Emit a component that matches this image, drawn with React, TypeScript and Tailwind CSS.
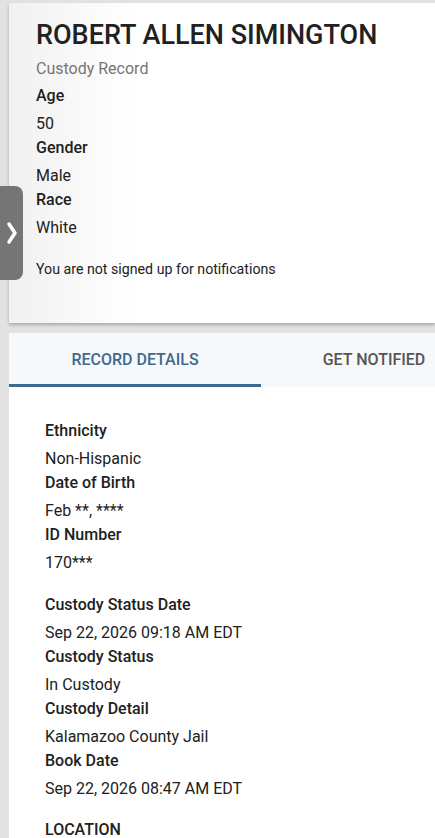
import React from 'react';

type Field = { label: string; value: string };

const summary: Field[] = [
  { label: 'Age', value: '50' },
  { label: 'Gender', value: 'Male' },
  { label: 'Race', value: 'White' },
];

const idFields: Field[] = [
  { label: 'Ethnicity', value: 'Non-Hispanic' },
  { label: 'Date of Birth', value: 'Feb **, ****' },
  { label: 'ID Number', value: '170***' },
];

const custodyFields: Field[] = [
  { label: 'Custody Status Date', value: 'Sep 22, 2026 09:18 AM EDT' },
  { label: 'Custody Status', value: 'In Custody' },
  { label: 'Custody Detail', value: 'Kalamazoo County Jail' },
  { label: 'Book Date', value: 'Sep 22, 2026 08:47 AM EDT' },
];

function FieldList({ fields }: { fields: Field[] }) {
  return (
    <div>
      {fields.map((f) => (
        <div key={f.label}>
          <div className="text-[16px] leading-6 font-medium text-[#212121]">{f.label}</div>
          <div className="mt-1 text-[16px] leading-6 text-[#212121]">{f.value}</div>
        </div>
      ))}
    </div>
  );
}

export default function App() {
  return (
    <div
      className="relative min-h-screen h-[838px] overflow-hidden bg-[#e2e2e2] pl-[9px] pt-[3px]"
      style={{ fontFamily: 'Roboto, "Noto Sans", sans-serif' }}
    >
      {/* header card */}
      <div className="h-[320px] bg-gradient-to-r from-[#f1f1f1] via-white via-30% to-white shadow-[0_2px_3px_rgba(0,0,0,0.25)] pl-[27px] pt-[15px]">
        <h1 className="text-[27px] leading-[34px] font-medium text-[#212121] whitespace-nowrap">
          ROBERT ALLEN SIMINGTON
        </h1>
        <div className="mt-[5px] text-[16px] leading-6 text-[#757575]">Custody Record</div>
        <div className="mt-[3px]">
          <FieldList fields={summary} />
        </div>
        <p className="mt-[17px] text-[14.2px] leading-6 text-[#212121]">You are not signed up for notifications</p>
      </div>

      {/* details card */}
      <div className="mt-[10px] bg-white h-[600px]">
        <div className="flex h-[54px] overflow-hidden bg-[#f7f8fa]">
          <div className="flex w-[252px] shrink-0 items-center justify-center border-b-[3px] border-[#3b6b8f] pt-[3px] text-[16px] font-medium uppercase text-[#3b6b8f]">
            Record Details
          </div>
          <div className="flex w-[226px] shrink-0 items-center justify-center text-[16px] font-medium uppercase text-[#555555] whitespace-nowrap">
            Get Notified
          </div>
        </div>
        <div className="pl-[36px] pt-[32px]">
          <FieldList fields={idFields} />
          <div className="mt-[18px]">
            <FieldList fields={custodyFields} />
          </div>
          <div className="mt-[17px] text-[16px] leading-6 font-medium text-[#212121]">LOCATION</div>
        </div>
      </div>

      {/* side drawer handle */}
      <button className="absolute left-0 top-[186px] flex h-[94px] w-[23px] items-center justify-center rounded-r-[8px] bg-[#757575]">
        <svg width="12" height="26" viewBox="0 0 12 26" fill="none">
          <path d="M3 4 L9 13 L3 22" stroke="white" strokeWidth="3.5" strokeLinecap="round" strokeLinejoin="round" />
        </svg>
      </button>
    </div>
  );
}
